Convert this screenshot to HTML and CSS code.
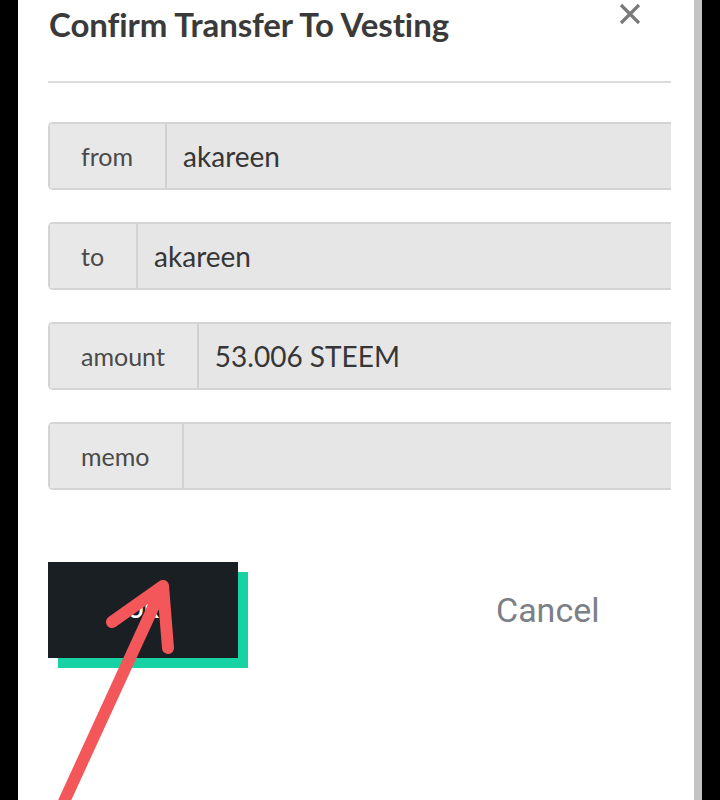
FILE: index.html
```html
<!DOCTYPE html>
<html lang="en">
<head>
<meta charset="utf-8">
<title>Confirm Transfer To Vesting</title>
<link rel="stylesheet" href="styles.css">
</head>
<body>
<div class="screen">
  <div class="edge-left"></div>
  <div class="panel">
    <div class="header">
      <h2 class="title">Confirm Transfer To Vesting</h2>
      <span class="close">
        <svg width="24" height="24" viewBox="0 0 24 24"><path d="M3 3L21 21M21 3L3 21" stroke="#7a7a7a" stroke-width="3.2" stroke-linecap="butt"/></svg>
      </span>
    </div>
    <hr class="divider">
    <div class="fields">
      <div class="field"><span class="label">from</span><span class="value">akareen</span></div>
      <div class="field"><span class="label">to</span><span class="value">akareen</span></div>
      <div class="field"><span class="label">amount</span><span class="value">53.006 STEEM</span></div>
      <div class="field"><span class="label">memo</span><span class="value"></span></div>
    </div>
    <div class="actions">
      <button class="ok">OK</button>
      <span class="cancel">Cancel</span>
    </div>
  </div>
  <div class="edge-gray"></div>
  <div class="edge-right"></div>
  <svg class="annotation" width="720" height="800" viewBox="0 0 720 800">
    <path d="M62 806L163 586M112 622L163 586L168 648" fill="none" stroke="#f4575a" stroke-width="12" stroke-linecap="round" stroke-linejoin="round"/>
  </svg>
</div>
</body>
</html>
```
FILE: styles.css
```css
html, body {
  margin: 0;
  padding: 0;
  background: #000;
}
.screen {
  position: relative;
  display: flex;
  width: 720px;
  height: 800px;
  overflow: hidden;
  font-family: "Lato", "Open Sans", sans-serif;
}
.edge-left {
  width: 18px;
  background: #000;
}
.panel {
  width: 676px;
  background: #fff;
  padding: 0 23px 0 30px;
  box-sizing: border-box;
}
.edge-gray {
  width: 8px;
  background: #c4c4c4;
}
.edge-right {
  flex: 1;
  background: #000;
}
.header {
  display: flex;
  justify-content: space-between;
  align-items: flex-start;
  height: 81px;
}
.title {
  margin: 4px 0 0 1px;
  font-size: 33px;
  font-weight: 700;
  color: #3a3a3a;
  letter-spacing: -0.1px;
}
.close {
  margin: 2px 29px 0 0;
  display: flex;
}
.divider {
  margin: 0;
  border: 0;
  height: 2px;
  background: #dcdcdc;
}
.fields {
  display: flex;
  flex-direction: column;
  gap: 32px;
  margin-top: 39px;
}
.field {
  display: flex;
  height: 68px;
  box-sizing: border-box;
  border: 2px solid #d4d4d4;
  border-right: 0;
  border-radius: 5px 0 0 5px;
  background: #e6e6e6;
}
.label {
  display: flex;
  align-items: center;
  padding: 0 32px 0 31px;
  font-size: 25px;
  color: #4a4a4a;
  background: #e8e8e8;
  border-right: 2px solid #d2d2d2;
}
.value {
  display: flex;
  align-items: center;
  padding-left: 16px;
  font-size: 28px;
  color: #363636;
  flex: 1;
}
.actions {
  display: flex;
  align-items: center;
  margin-top: 72px;
}
.ok {
  width: 190px;
  height: 96px;
  background: #1a1f24;
  color: #fff;
  border: 0;
  border-radius: 0;
  box-shadow: 10px 10px 0 #17d3a3;
  font-family: "Roboto", sans-serif;
  font-size: 24px;
  font-weight: 500;
  padding: 0;
}
.cancel {
  margin-left: 258px;
  font-family: "Roboto", sans-serif;
  font-size: 34px;
  color: #7b8086;
}
.annotation {
  position: absolute;
  left: 0;
  top: 0;
  pointer-events: none;
}
```
